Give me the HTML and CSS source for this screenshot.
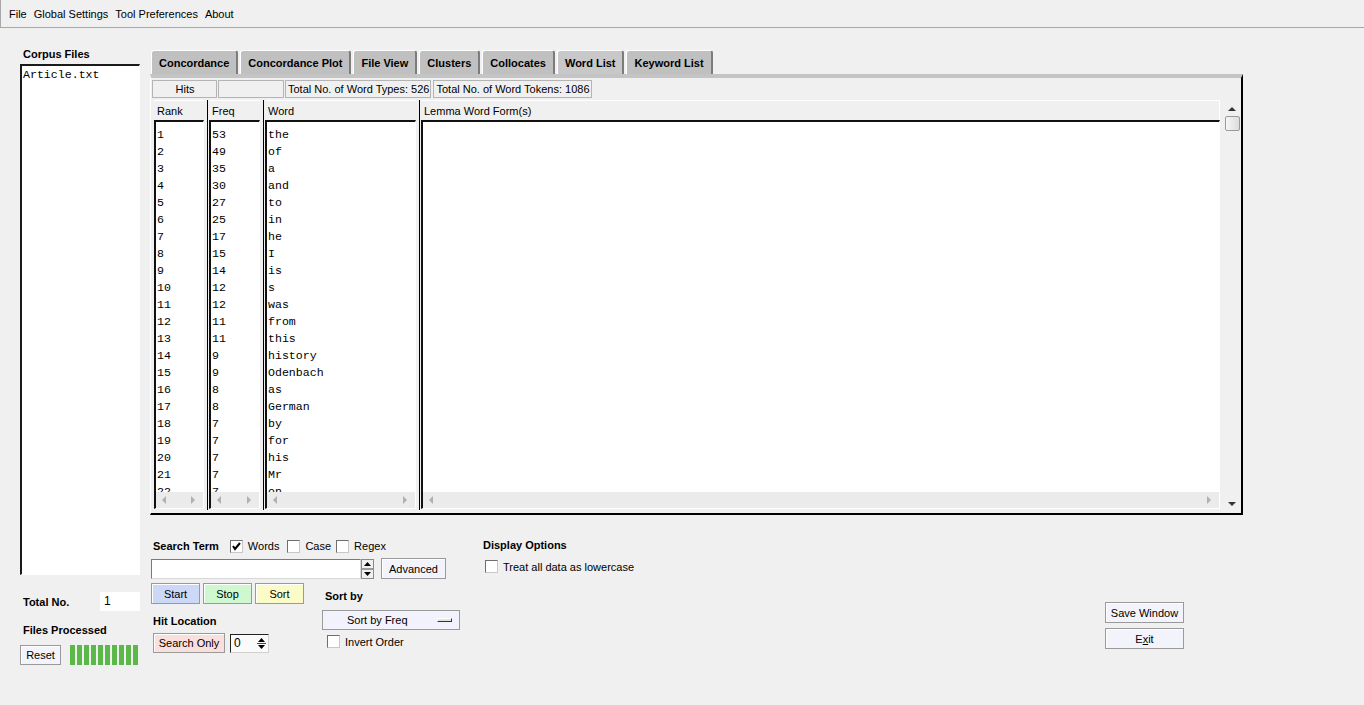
FILE: index.html
```html
<!DOCTYPE html>
<html>
<head>
  <title>AntConc</title>
  <link rel="stylesheet" href="styles.css">
</head>
<body>
  <div class="menubar">
    <span>File</span>
    <span>Global Settings</span>
    <span>Tool Preferences</span>
    <span>About</span>
  </div>

  <div class="main">
    <!-- corpus file list on the left -->
    <div class="sidebar">
      <div class="side-title">Corpus Files</div>
      <div class="file-list">
        <div>Article.txt</div>
      </div>
      <div class="total-row">
        <span class="bold">Total No.</span>
        <span class="total-field">1</span>
      </div>
      <div class="files-label bold">Files Processed</div>
      <div class="reset-row">
        <button class="btn reset-btn">Reset</button>
        <div class="progress"></div>
      </div>
    </div>

    <div class="workspace">
      <div class="tabs">
        <div class="tab">Concordance</div>
        <div class="tab">Concordance Plot</div>
        <div class="tab">File View</div>
        <div class="tab">Clusters</div>
        <div class="tab">Collocates</div>
        <div class="tab active">Word List</div>
        <div class="tab">Keyword List</div>
      </div>

      <div class="panel">
        <div class="status-row">
          <div class="status-box hits">Hits</div>
          <div class="status-box blank"></div>
          <div class="status-box">Total No. of Word Types: 526</div>
          <div class="status-box tokens">Total No. of Word Tokens: 1086</div>
        </div>

        <div class="table">
          <div class="col col-rank">
            <div class="col-head">Rank</div>
            <div class="col-list">
              <div class="list-body">
                <div>1</div><div>2</div><div>3</div><div>4</div><div>5</div><div>6</div>
                <div>7</div><div>8</div><div>9</div><div>10</div><div>11</div><div>12</div>
                <div>13</div><div>14</div><div>15</div><div>16</div><div>17</div><div>18</div>
                <div>19</div><div>20</div><div>21</div><div>22</div>
              </div>
              <div class="hscroll"><span class="arrow-left"></span><span class="arrow-right"></span></div>
            </div>
          </div>
          <div class="col col-freq">
            <div class="col-head">Freq</div>
            <div class="col-list">
              <div class="list-body">
                <div>53</div><div>49</div><div>35</div><div>30</div><div>27</div><div>25</div>
                <div>17</div><div>15</div><div>14</div><div>12</div><div>12</div><div>11</div>
                <div>11</div><div>9</div><div>9</div><div>8</div><div>8</div><div>7</div>
                <div>7</div><div>7</div><div>7</div><div>7</div>
              </div>
              <div class="hscroll"><span class="arrow-left"></span><span class="arrow-right"></span></div>
            </div>
          </div>
          <div class="col col-word">
            <div class="col-head">Word</div>
            <div class="col-list">
              <div class="list-body">
                <div>the</div><div>of</div><div>a</div><div>and</div><div>to</div><div>in</div>
                <div>he</div><div>I</div><div>is</div><div>s</div><div>was</div><div>from</div>
                <div>this</div><div>history</div><div>Odenbach</div><div>as</div><div>German</div><div>by</div>
                <div>for</div><div>his</div><div>Mr</div><div>on</div>
              </div>
              <div class="hscroll"><span class="arrow-left"></span><span class="arrow-right"></span></div>
            </div>
          </div>
          <div class="col col-lemma">
            <div class="col-head">Lemma Word Form(s)</div>
            <div class="col-list">
              <div class="list-body"></div>
              <div class="hscroll"><span class="arrow-left"></span><span class="arrow-right"></span></div>
            </div>
          </div>
          <div class="vscroll">
            <span class="arrow-up"></span>
            <div class="thumb"></div>
            <span class="arrow-down"></span>
          </div>
        </div>
      </div>

      <!-- search / sort / display options -->
      <div class="controls">
        <div class="search-block">
          <div class="search-head">
            <span class="bold">Search Term</span>
            <span class="check checked first">
              <svg width="11" height="11" viewBox="0 0 11 11"><polyline points="2,5 4,8 9,2" fill="none" stroke="#000" stroke-width="2"/></svg>
            </span>
            <span class="check-text">Words</span>
            <span class="check"></span>
            <span class="check-text">Case</span>
            <span class="check tight"></span>
            <span class="check-text">Regex</span>
          </div>
          <div class="search-row">
            <div class="search-field"></div>
            <svg class="spinner" width="13" height="20" viewBox="0 0 13 20">
              <rect x="0.5" y="0.5" width="12" height="19" fill="#f0f0f0" stroke="#8a8a8a"/>
              <line x1="1" y1="10" x2="12" y2="10" stroke="#444"/>
              <polygon points="3,7 10,7 6.5,3" fill="#000"/>
              <polygon points="3,13 10,13 6.5,17" fill="#000"/>
            </svg>
            <button class="btn advanced-btn">Advanced</button>
          </div>
          <div class="lower">
            <div class="left-sub">
              <div class="action-row">
                <button class="btn start-btn">Start</button>
                <button class="btn stop-btn">Stop</button>
                <button class="btn sort-btn">Sort</button>
              </div>
              <div class="hit-label bold">Hit Location</div>
              <div class="hit-row">
                <button class="btn search-only-btn">Search Only</button>
                <div class="spin-field">
                  <span>0</span>
                  <svg width="9" height="15" viewBox="0 0 9 15">
                    <line x1="0" y1="7.5" x2="9" y2="7.5" stroke="#444"/>
                    <polygon points="1,6 8,6 4.5,2" fill="#000"/>
                    <polygon points="1,9 8,9 4.5,13" fill="#000"/>
                  </svg>
                </div>
              </div>
            </div>
            <div class="sort-sub">
              <div class="sort-label bold">Sort by</div>
              <div class="dropdown">
                <span>Sort by Freq</span>
                <span class="drop-bar"></span>
              </div>
              <div class="invert-row">
                <span class="check"></span>
                <span class="check-text">Invert Order</span>
              </div>
            </div>
          </div>
        </div>

        <div class="display-block">
          <div class="bold">Display Options</div>
          <div class="lowercase-row">
            <span class="check"></span>
            <span class="check-text">Treat all data as lowercase</span>
          </div>
        </div>

        <div class="window-buttons">
          <button class="btn wide-btn">Save Window</button>
          <button class="btn wide-btn">E<span class="mnemonic">x</span>it</button>
        </div>
      </div>
    </div>
  </div>
</body>
</html>
```

FILE: styles.css
```css
* {
  box-sizing: border-box;
}
body {
  margin: 0;
  height: 705px;
  overflow: hidden;
  background-color: #f0f0f0;
  font-family: "Liberation Sans", Arial, sans-serif;
  font-size: 11px;
  color: #000;
}
.bold {
  font-weight: bold;
}
.menubar {
  height: 28px;
  display: flex;
  align-items: center;
  padding-left: 8px;
  border-left: 1px solid #a8a8a8;
  border-bottom: 1px solid #a8a8a8;
  font-size: 11px;
}
.menubar span {
  margin-right: 7px;
}
.main {
  display: flex;
  padding: 20px 0 0 20px;
}

/* left column */
.sidebar {
  width: 120px;
  display: flex;
  flex-direction: column;
}
.side-title {
  height: 16px;
  line-height: 13px;
  padding-left: 3px;
  font-weight: bold;
}
.file-list {
  height: 511px;
  background-color: #fff;
  border-top: 2px solid #1a1a1a;
  border-left: 2px solid #1a1a1a;
  border-right: 1px solid #fff;
  border-bottom: 1px solid #fff;
  padding: 1px 1px;
  font-family: "Liberation Mono", "Courier New", monospace;
  font-size: 11.6px;
  line-height: 15px;
}
.total-row {
  margin-top: 17px;
  height: 19px;
  display: flex;
  align-items: center;
  padding-left: 3px;
}
.total-field {
  margin-left: auto;
  width: 40px;
  height: 19px;
  line-height: 19px;
  padding-left: 4px;
  background-color: #fff;
  font-size: 12px;
}
.files-label {
  margin-top: 13px;
  height: 13px;
  line-height: 13px;
  padding-left: 3px;
}
.reset-row {
  margin-top: 8px;
  display: flex;
  align-items: center;
}
.progress {
  margin-left: auto;
  width: 70px;
  height: 20px;
  background: repeating-linear-gradient(to right, #5cb848 0 5px, transparent 5px 7px);
}

/* buttons */
.btn {
  height: 21px;
  padding: 0;
  border: 1px solid #9a9a9a;
  box-shadow: inset 1px 1px 0 #fff;
  background-color: #f3f3fb;
  font-family: inherit;
  font-size: 11px;
  color: #000;
}
.reset-btn {
  width: 41px;
  height: 20px;
}
.mnemonic {
  text-decoration: underline;
}

/* tabbed area */
.workspace {
  width: 1093px;
  margin-left: 10px;
  margin-top: 2px;
}
.tabs {
  display: flex;
  height: 24px;
  padding-left: 1px;
}
.tab {
  height: 24px;
  line-height: 24px;
  padding: 0 7px;
  margin-right: 2px;
  background-color: #c0c0c0;
  border-top: 1px solid #fff;
  border-left: 1px solid #fff;
  border-right: 2px solid #7c7c7c;
  border-radius: 3px 3px 0 0;
  font-weight: bold;
}
.tab.active {
  background-color: #c8c8c8;
}
.panel {
  height: 441px;
  border-top: 4px solid #c4c4c4;
  border-left: 1px solid #fff;
  border-right: 2px solid #000;
  border-bottom: 2px solid #000;
  padding: 2px 0 0 1px;
}
.status-row {
  display: flex;
  height: 18px;
  gap: 1px;
}
.status-box {
  height: 18px;
  line-height: 16px;
  padding: 0 1px 0 2px;
  border: 1px solid #b4b4b4;
  font-size: 11px;
  white-space: nowrap;
}
.status-box.hits {
  width: 65px;
  text-align: center;
}
.status-box.blank {
  width: 66px;
}
.status-box.tokens {
  margin-left: 1px;
}
.table {
  display: flex;
  height: 410px;
  margin-top: 2px;
}
.col {
  display: flex;
  flex-direction: column;
  min-height: 0;
  padding-right: 3px;
}
.col + .col {
  border-left: 1px solid #000;
  padding-left: 1px;
}
.col-rank {
  width: 55px;
  padding-left: 2px;
}
.col-freq {
  width: 56px;
}
.col-word {
  width: 156px;
}
.col-lemma {
  flex: 1;
}
.col-head {
  height: 20px;
  line-height: 21px;
  padding-left: 3px;
  border-top: 1px solid #fff;
}
.col-lemma .col-head {
  border-right: 1px solid #fff;
}
.col-list {
  flex: 1;
  min-height: 0;
  display: flex;
  flex-direction: column;
  background-color: #fff;
  border-top: 2px solid #111;
  border-left: 2px solid #111;
  border-right: 1px solid #fff;
  border-bottom: 1px solid #fff;
  margin-bottom: 1px;
}
.list-body {
  flex: 1;
  min-height: 0;
  overflow: hidden;
  padding: 4px 0 0 1px;
  font-family: "Liberation Mono", "Courier New", monospace;
  font-size: 11.6px;
  line-height: 17px;
}
.hscroll {
  height: 16px;
  flex-shrink: 0;
  display: flex;
  align-items: center;
  justify-content: space-between;
  padding: 0 8px 0 6px;
  background-color: #ebebeb;
}
.arrow-left {
  width: 0;
  height: 0;
  border-top: 4px solid transparent;
  border-bottom: 4px solid transparent;
  border-right: 4px solid #b0b0b0;
}
.arrow-right {
  width: 0;
  height: 0;
  border-top: 4px solid transparent;
  border-bottom: 4px solid transparent;
  border-left: 4px solid #b0b0b0;
}
.vscroll {
  width: 18px;
  display: flex;
  flex-direction: column;
  align-items: center;
  padding: 7px 0 4px 0;
}
.arrow-up {
  width: 0;
  height: 0;
  border-left: 4px solid transparent;
  border-right: 4px solid transparent;
  border-bottom: 4px solid #333;
}
.arrow-down {
  margin-top: auto;
  width: 0;
  height: 0;
  border-left: 4px solid transparent;
  border-right: 4px solid transparent;
  border-top: 4px solid #333;
}
.thumb {
  margin-top: 5px;
  width: 15px;
  height: 15px;
  border: 1px solid #9a9a9a;
  border-radius: 2px;
  background: linear-gradient(to right, #f6f6f6, #dcdcdc);
}

/* controls under the table */
.controls {
  display: flex;
  margin-top: 24px;
  padding-left: 1px;
}
.search-block {
  width: 332px;
}
.search-head {
  display: flex;
  align-items: center;
  height: 14px;
  padding-left: 2px;
}
.check {
  width: 13px;
  height: 13px;
  margin-left: 8px;
  display: inline-flex;
  align-items: center;
  justify-content: center;
  background-color: #fff;
  border: 1px solid;
  border-color: #6e6e6e #c8c8c8 #c8c8c8 #6e6e6e;
}
.check.first {
  margin-left: 11px;
}
.check.tight {
  margin-left: 5px;
}
.check-text {
  margin-left: 5px;
}
.search-row {
  display: flex;
  align-items: center;
  margin-top: 5px;
}
.search-field {
  width: 210px;
  height: 20px;
  background-color: #fff;
  border: 1px solid;
  border-color: #7a7a7a #d8d8d8 #d8d8d8 #7a7a7a;
}
.spinner {
  display: block;
}
.advanced-btn {
  margin-left: 7px;
  width: 65px;
}
.lower {
  display: flex;
}
.action-row {
  display: flex;
  gap: 3px;
  margin-top: 4px;
}
.start-btn,
.stop-btn,
.sort-btn {
  width: 49px;
}
.start-btn {
  background-color: #ccd8f8;
}
.stop-btn {
  background-color: #d0f8d0;
}
.sort-btn {
  background-color: #fbfbc8;
}
.hit-label {
  margin-top: 11px;
  height: 13px;
  line-height: 13px;
  padding-left: 2px;
}
.hit-row {
  display: flex;
  align-items: center;
  margin-top: 5px;
  padding-left: 2px;
}
.search-only-btn {
  width: 72px;
  height: 20px;
  background-color: #fae0dc;
}
.spin-field {
  margin-left: 5px;
  width: 39px;
  height: 19px;
  display: flex;
  align-items: center;
  justify-content: space-between;
  padding: 0 2px 0 3px;
  background-color: #fafafa;
  border: 1px solid;
  border-color: #222 #d0d0d0 #d0d0d0 #222;
  font-size: 12px;
}
.sort-sub {
  margin-left: 18px;
  padding-top: 11px;
}
.sort-label {
  height: 13px;
  line-height: 13px;
  padding-left: 3px;
}
.dropdown {
  margin-top: 7px;
  width: 138px;
  height: 20px;
  display: flex;
  align-items: center;
  padding-left: 24px;
  background-color: #f2f2fc;
  border: 1px solid #9a9a9a;
}
.drop-bar {
  margin-left: auto;
  margin-right: 7px;
  width: 15px;
  height: 4px;
  background-color: #e4e4e4;
  border: 1px solid;
  border-color: #fff #333 #333 #fff;
}
.invert-row {
  display: flex;
  align-items: center;
  margin-top: 5px;
  margin-left: -3px;
}
.lowercase-row {
  display: flex;
  align-items: center;
  margin-top: 9px;
  margin-left: -6px;
}
.window-buttons {
  margin-left: auto;
  margin-right: 59px;
  padding-top: 63px;
  display: flex;
  flex-direction: column;
  gap: 5px;
}
.wide-btn {
  width: 79px;
}
```
